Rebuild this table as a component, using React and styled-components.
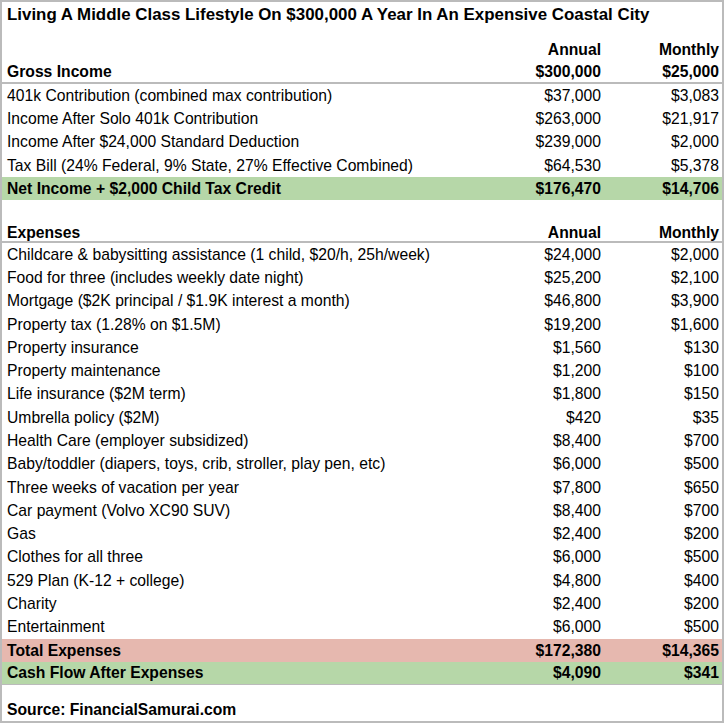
import React from "react";
import styled, { createGlobalStyle } from "styled-components";

const GlobalStyle = createGlobalStyle`
  body {
    margin: 0;
    background: #fff;
  }
`;

const Sheet = styled.div`
  width: 724px;
  box-sizing: border-box;
  border: 2px solid #bbb;
  font-family: "Liberation Sans", Arial, sans-serif;
  font-size: 15.7px;
  color: #000;
`;

const Row = styled.div`
  display: grid;
  grid-template-columns: 1fr 120px 118px;
  height: ${(p) => p.$h}px;
  align-items: ${(p) => (p.$bottom ? "end" : "center")};
  background: ${(p) => p.$bg || "transparent"};
  border-bottom: ${(p) => (p.$line ? `${p.$line}px solid #bbb` : "none")};
  font-weight: ${(p) => (p.$bold ? "bold" : "normal")};
`;

const Cell = styled.div`
  line-height: 18px;
  padding: 0 3px 0 5px;
  white-space: nowrap;
  text-align: ${(p) => (p.$num ? "right" : "left")};
  padding-bottom: ${(p) => (p.$bottom ? "2px" : "0")};
`;

const Title = styled(Cell)`
  grid-column: 1 / -1;
  font-size: ${(p) => (p.$big ? "16.9px" : "inherit")};
`;

const ROW = 23.3;

const income = [
  ["401k Contribution (combined max contribution)", "$37,000", "$3,083"],
  ["Income After Solo 401k Contribution", "$263,000", "$21,917"],
  ["Income After $24,000 Standard Deduction", "$239,000", "$2,000"],
  ["Tax Bill (24% Federal, 9% State, 27% Effective Combined)", "$64,530", "$5,378"],
];

const expenses = [
  ["Childcare & babysitting assistance (1 child, $20/h, 25h/week)", "$24,000", "$2,000"],
  ["Food for three (includes weekly date night)", "$25,200", "$2,100"],
  ["Mortgage ($2K principal / $1.9K interest a month)", "$46,800", "$3,900"],
  ["Property tax (1.28% on $1.5M)", "$19,200", "$1,600"],
  ["Property insurance", "$1,560", "$130"],
  ["Property maintenance", "$1,200", "$100"],
  ["Life insurance ($2M term)", "$1,800", "$150"],
  ["Umbrella policy ($2M)", "$420", "$35"],
  ["Health Care (employer subsidized)", "$8,400", "$700"],
  ["Baby/toddler (diapers, toys, crib, stroller, play pen, etc)", "$6,000", "$500"],
  ["Three weeks of vacation per year", "$7,800", "$650"],
  ["Car payment (Volvo XC90 SUV)", "$8,400", "$700"],
  ["Gas", "$2,400", "$200"],
  ["Clothes for all three", "$6,000", "$500"],
  ["529 Plan (K-12 + college)", "$4,800", "$400"],
  ["Charity", "$2,400", "$200"],
  ["Entertainment", "$6,000", "$500"],
];

function Line({ label, annual, monthly, ...rest }) {
  return (
    <Row {...rest}>
      <Cell $bottom={rest.$bottom}>{label}</Cell>
      <Cell $num $bottom={rest.$bottom}>{annual}</Cell>
      <Cell $num $bottom={rest.$bottom}>{monthly}</Cell>
    </Row>
  );
}

export default function App() {
  return (
    <>
      <GlobalStyle />
      <Sheet>
        <Row $h={25} $bold>
          <Title $big>Living A Middle Class Lifestyle On $300,000 A Year In An Expensive Coastal City</Title>
        </Row>
        <Line $h={34} $bold $bottom label="" annual="Annual" monthly="Monthly" />
        <Line $h={21} $bold $line={2} label="Gross Income" annual="$300,000" monthly="$25,000" />
        {income.map(([l, a, m]) => (
          <Line key={l} $h={ROW} label={l} annual={a} monthly={m} />
        ))}
        <Line $h={ROW} $bold $bg="#b6d7a8" label="Net Income + $2,000 Child Tax Credit" annual="$176,470" monthly="$14,706" />
        <Row $h={ROW} />
        <Line $h={17.2} $bold $line={2} label="Expenses" annual="Annual" monthly="Monthly" />
        {expenses.map(([l, a, m]) => (
          <Line key={l} $h={ROW} label={l} annual={a} monthly={m} />
        ))}
        <Line $h={23} $bold $bg="#e6b8af" label="Total Expenses" annual="$172,380" monthly="$14,365" />
        <Line $h={22} $bold $bg="#b6d7a8" $line={1} label="Cash Flow After Expenses" annual="$4,090" monthly="$341" />
        <Row $h={14} />
        <Row $h={22} $bold>
          <Title>Source: FinancialSamurai.com</Title>
        </Row>
      </Sheet>
    </>
  );
}
